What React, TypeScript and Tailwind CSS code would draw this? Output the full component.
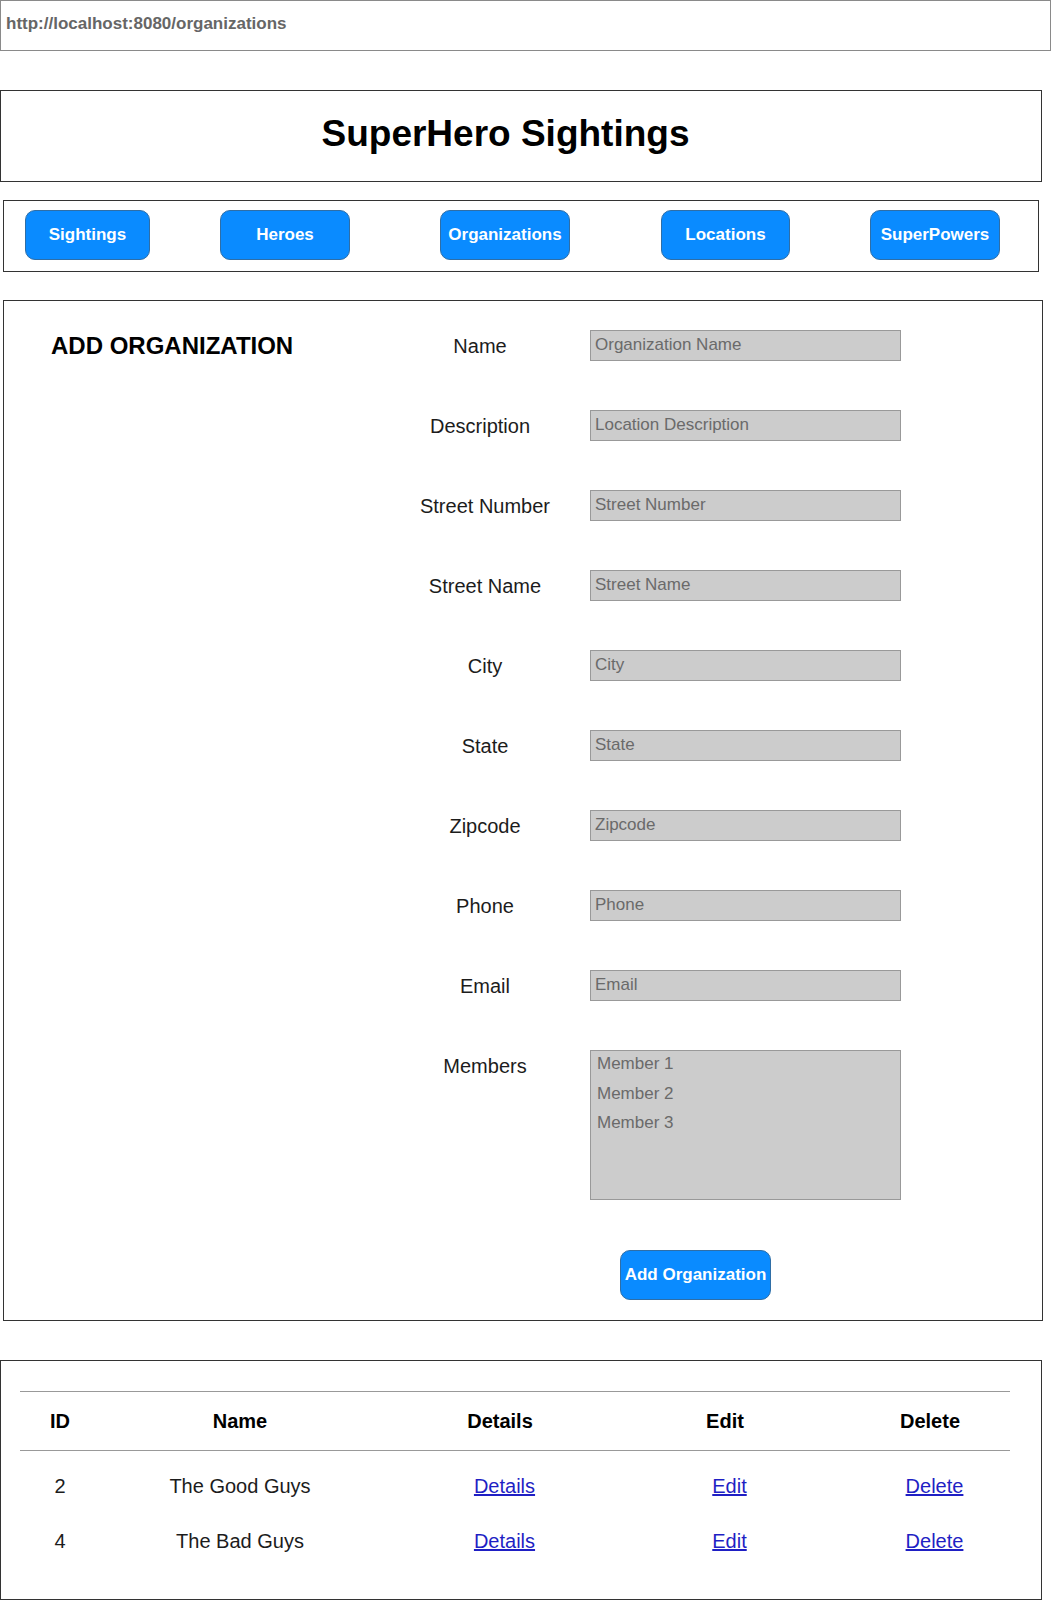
const navItems = [
  { label: 'Sightings', ml: 'ml-[21px]', w: 'w-[125px]' },
  { label: 'Heroes', ml: 'ml-[70px]', w: 'w-[130px]' },
  { label: 'Organizations', ml: 'ml-[90px]', w: 'w-[130px]' },
  { label: 'Locations', ml: 'ml-[91px]', w: 'w-[129px]' },
  { label: 'SuperPowers', ml: 'ml-[80px]', w: 'w-[130px]' },
]

const fields = [
  { label: 'Name', placeholder: 'Organization Name', shift: true },
  { label: 'Description', placeholder: 'Location Description', shift: true },
  { label: 'Street Number', placeholder: 'Street Number' },
  { label: 'Street Name', placeholder: 'Street Name' },
  { label: 'City', placeholder: 'City' },
  { label: 'State', placeholder: 'State' },
  { label: 'Zipcode', placeholder: 'Zipcode' },
  { label: 'Phone', placeholder: 'Phone' },
  { label: 'Email', placeholder: 'Email' },
]

const organizations = [
  { id: 2, name: 'The Good Guys' },
  { id: 4, name: 'The Bad Guys' },
]

function BlueButton({ label, className }: { label: string; className: string }) {
  return (
    <button
      className={`flex h-[50px] shrink-0 items-center justify-center rounded-[10px] border border-[#2f6ea6] bg-[#0a8bff] text-[17px] font-bold text-white ${className}`}
    >
      {label}
    </button>
  )
}

export default function App() {
  return (
    <div className="w-[1051px] bg-white pb-[1px] font-['Liberation_Sans',Arial,sans-serif] text-[#1c1c1c]">
      <div className="flex h-[51px] items-center border border-[#8a8a8a] px-[5px] pb-[4px] text-[17px] font-bold text-[#666]">
        http://localhost:8080/organizations
      </div>

      <header className="mt-[39px] flex h-[92px] w-[1042px] items-center justify-center border border-[#333] pb-[4px] pr-[31px]">
        <h1 className="text-[37px] font-bold text-black">SuperHero Sightings</h1>
      </header>

      <nav className="ml-[3px] mt-[18px] flex h-[72px] w-[1036px] items-start border border-[#333] pt-[9px]">
        {navItems.map((item) => (
          <BlueButton key={item.label} label={item.label} className={`${item.ml} ${item.w}`} />
        ))}
      </nav>

      <section className="ml-[3px] mt-[28px] flex h-[1021px] w-[1040px] border border-[#333] pt-[29px]">
        <div className="w-[396px] pl-[47px]">
          <h2 className="flex h-[31px] items-center text-[24px] font-bold text-black">ADD ORGANIZATION</h2>
        </div>

        <div className="flex flex-col">
          <div className="flex flex-col gap-[49px]">
            {fields.map((field) => (
              <div key={field.label} className="flex items-center">
                <label className={`w-[170px] text-center text-[20px] ${field.shift ? 'pr-[10px]' : ''}`}>
                  {field.label}
                </label>
                <div className="ml-[20px] flex h-[31px] w-[311px] items-center border border-[#999] bg-[#cccccc] px-[4px] pb-[1px] text-[17px] text-[#6a6a6a]">
                  {field.placeholder}
                </div>
              </div>
            ))}
            <div className="flex items-start">
              <label className="flex h-[31px] w-[170px] items-center justify-center text-[20px]">Members</label>
              <div className="ml-[20px] flex h-[150px] w-[311px] flex-col gap-[3.5px] border border-[#999] bg-[#cccccc] px-[6px] text-[17px] text-[#6a6a6a]">
                <span className="leading-[26px]">Member 1</span>
                <span className="leading-[26px]">Member 2</span>
                <span className="leading-[26px]">Member 3</span>
              </div>
            </div>
          </div>
          <BlueButton label="Add Organization" className="ml-[220px] mt-[50px] w-[151px]" />
        </div>
      </section>

      <section className="mt-[39px] h-[240px] w-[1042px] border border-[#333] px-[19px] pt-[30px]">
        <div className="w-[990px]">
          <div className="flex h-[60px] items-center border-y border-[#999] text-[20px] font-bold text-black">
            <div className="w-[80px] shrink-0 text-center">ID</div>
            <div className="w-[280px] shrink-0 text-center">Name</div>
            <div className="w-[240px] shrink-0 text-center">Details</div>
            <div className="w-[210px] shrink-0 text-center">Edit</div>
            <div className="w-[200px] shrink-0 text-center">Delete</div>
          </div>
          <div className="pt-[7px]">
            {organizations.map((org) => (
              <div key={org.id} className="flex h-[55px] items-center text-[20px]">
                <div className="w-[80px] shrink-0 text-center">{org.id}</div>
                <div className="w-[280px] shrink-0 text-center">{org.name}</div>
                <div className="w-[240px] shrink-0 pl-[9px] text-center">
                  <a href="#" className="text-[#1f1fc4] underline">Details</a>
                </div>
                <div className="w-[210px] shrink-0 pl-[9px] text-center">
                  <a href="#" className="text-[#1f1fc4] underline">Edit</a>
                </div>
                <div className="w-[200px] shrink-0 pl-[9px] text-center">
                  <a href="#" className="text-[#1f1fc4] underline">Delete</a>
                </div>
              </div>
            ))}
          </div>
        </div>
      </section>
    </div>
  )
}
